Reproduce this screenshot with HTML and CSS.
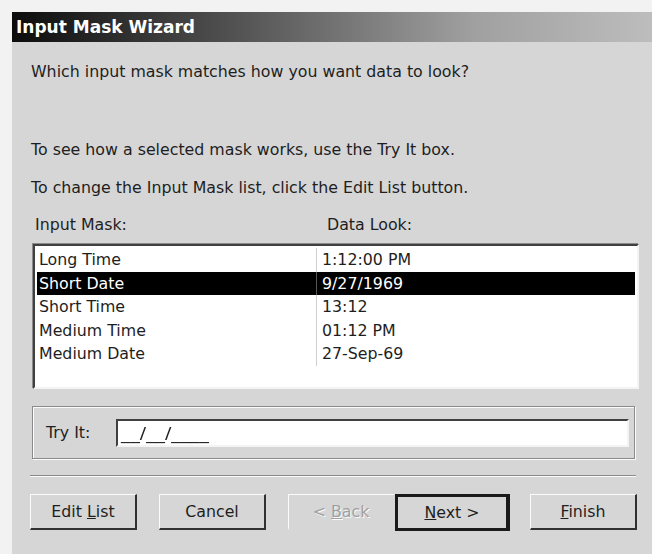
FILE: index.html
```html
<!DOCTYPE html>
<html>
<head>
<meta charset="utf-8">
<title>Input Mask Wizard</title>
<link rel="stylesheet" href="styles.css">
</head>
<body>
<div class="window">
  <div class="titlebar"><span class="title">Input Mask Wizard</span></div>
  <div class="body">
    <p class="line q1">Which input mask matches how you want data to look?</p>
    <p class="line q2">To see how a selected mask works, use the Try It box.</p>
    <p class="line q3">To change the Input Mask list, click the Edit List button.</p>
    <div class="headers">
      <span class="hdr-mask">Input Mask:</span>
      <span class="hdr-look">Data Look:</span>
    </div>
    <div class="listbox">
      <div class="row"><span class="c1">Long Time</span><span class="c2">1:12:00 PM</span></div>
      <div class="row selected"><span class="c1">Short Date</span><span class="c2">9/27/1969</span></div>
      <div class="row"><span class="c1">Short Time</span><span class="c2">13:12</span></div>
      <div class="row"><span class="c1">Medium Time</span><span class="c2">01:12 PM</span></div>
      <div class="row"><span class="c1">Medium Date</span><span class="c2">27-Sep-69</span></div>
    </div>
    <div class="tryframe">
      <span class="trylabel">Try It:</span>
      <div class="tryinput"><span class="mask">__/__/____</span></div>
    </div>
    <div class="separator"></div>
    <div class="buttons">
      <div class="btn">Edit <u>L</u>ist</div>
      <div class="btn">Cancel</div>
      <div class="btn disabled">&lt; <u>B</u>ack</div>
      <div class="btn default"><u>N</u>ext &gt;</div>
      <div class="btn"><u>F</u>inish</div>
    </div>
  </div>
</div>
</body>
</html>
```
FILE: styles.css
```css
html, body {
  margin: 0;
  padding: 0;
}

body {
  background: #f2f2f2;
  width: 652px;
  height: 554px;
  overflow: hidden;
  font-family: "DejaVu Sans", sans-serif;
  font-size: 15.8px;
  color: #1e1e1e;
}

.window {
  margin: 12px 0 0 12px;
  width: 660px;
  height: 542px;
  background: #d6d6d6;
  display: flex;
  flex-direction: column;
}

.titlebar {
  height: 30px;
  display: flex;
  align-items: center;
  background: linear-gradient(to right, #0c0c0c 0%, #4a4a4a 30%, #a0a0a0 70%, #c0c0c0 100%);
}

.title {
  margin-left: 4px;
  color: #fff;
  font-weight: bold;
  font-size: 17px;
}

.body {
  display: flex;
  flex-direction: column;
  padding-left: 19px;
}

.line {
  margin: 0;
  line-height: 20px;
}

.q1 { margin-top: 20px; }
.q2 { margin-top: 58px; }
.q3 { margin-top: 18px; }

.headers {
  margin-top: 17px;
  padding-left: 4px;
  line-height: 20px;
  display: flex;
}

.hdr-mask { width: 292px; }

.listbox {
  margin-top: 9px;
  margin-left: 2px;
  width: 598px;
  height: 139px;
  background: #fff;
  border-top: 2px solid #404040;
  border-left: 2px solid #404040;
  border-right: 2px solid #f4f4f4;
  border-bottom: 2px solid #f4f4f4;
  box-shadow: -1px -1px 0 #8a8a8a;
  padding: 2px 2px 0 2px;
  box-sizing: content-box;
}

.row {
  height: 23.5px;
  line-height: 23.5px;
  display: flex;
}

.row .c1 {
  width: 277px;
  padding-left: 2px;
  border-right: 1px solid #cfcfcf;
}

.row .c2 {
  padding-left: 5px;
}

.row.selected {
  background: #000;
  color: #fff;
}

.row.selected .c1 { border-right-color: #555; }

.tryframe {
  margin-top: 17px;
  margin-left: 1px;
  width: 601px;
  height: 51px;
  border: 1px solid #8a8a8a;
  box-shadow: inset 1px 1px 0 #fbfbfb, 1px 1px 0 #fbfbfb;
  display: flex;
  align-items: center;
}

.trylabel {
  margin-left: 13px;
  width: 70px;
}

.tryinput {
  width: 506px;
  height: 24px;
  line-height: 26px;
  background: #fff;
  border-top: 2px solid #404040;
  border-left: 2px solid #404040;
  border-right: 2px solid #f4f4f4;
  border-bottom: 2px solid #f4f4f4;
  padding-left: 3px;
}

/* the empty date mask is drawn a little wider than the body font */
.mask {
  display: inline-block;
  transform: scaleX(1.19);
  transform-origin: left center;
}

.separator {
  margin-top: 16px;
  margin-left: -1px;
  width: 606px;
  height: 1px;
  background: #8a8a8a;
  border-bottom: 1px solid #fbfbfb;
}

.buttons {
  margin-top: 17px;
  margin-left: -1px;
  display: flex;
}

.btn {
  width: 104px;
  height: 33px;
  line-height: 33px;
  text-align: center;
  background: #d6d6d6;
  border-top: 1px solid #fbfbfb;
  border-left: 1px solid #fbfbfb;
  border-right: 2px solid #303030;
  border-bottom: 2px solid #303030;
  margin-right: 22px;
}

.btn:nth-child(3) {
  margin-right: 0;
}

.btn.disabled {
  color: #a0a0a0;
  text-shadow: 1px 1px 0 #fbfbfb;
  border-right-color: #d6d6d6;
  border-bottom-color: #d6d6d6;
}

.btn.default {
  width: 108px;
  height: 31px;
  line-height: 31px;
  border: 3px solid #1a1a1a;
  border-right-width: 4px;
  margin-right: 20px;
}
```
